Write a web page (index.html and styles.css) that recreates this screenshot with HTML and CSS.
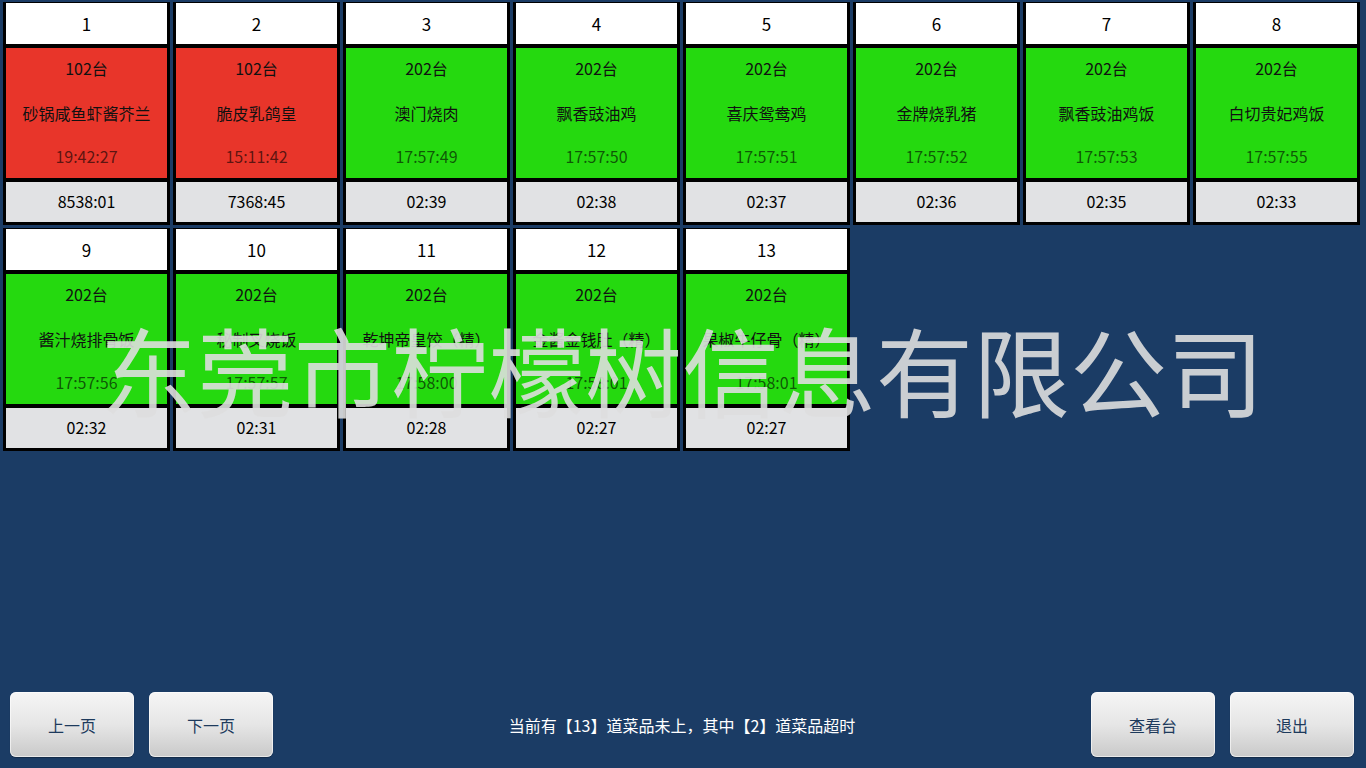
FILE: index.html
```html
<!DOCTYPE html>
<html lang="zh-CN">
<head>
<meta charset="utf-8">
<title>厨房显示</title>
<link rel="stylesheet" href="styles.css">
</head>
<body>
<div class="screen">
  <div class="grid">
    <div class="card"><div class="head">1</div><div class="body red"><div>102台</div><div>砂锅咸鱼虾酱芥兰</div><div class="time">19:42:27</div></div><div class="foot">8538:01</div></div>
    <div class="card"><div class="head">2</div><div class="body red"><div>102台</div><div>脆皮乳鸽皇</div><div class="time">15:11:42</div></div><div class="foot">7368:45</div></div>
    <div class="card"><div class="head">3</div><div class="body green"><div>202台</div><div>澳门烧肉</div><div class="time">17:57:49</div></div><div class="foot">02:39</div></div>
    <div class="card"><div class="head">4</div><div class="body green"><div>202台</div><div>飘香豉油鸡</div><div class="time">17:57:50</div></div><div class="foot">02:38</div></div>
    <div class="card"><div class="head">5</div><div class="body green"><div>202台</div><div>喜庆鸳鸯鸡</div><div class="time">17:57:51</div></div><div class="foot">02:37</div></div>
    <div class="card"><div class="head">6</div><div class="body green"><div>202台</div><div>金牌烧乳猪</div><div class="time">17:57:52</div></div><div class="foot">02:36</div></div>
    <div class="card"><div class="head">7</div><div class="body green"><div>202台</div><div>飘香豉油鸡饭</div><div class="time">17:57:53</div></div><div class="foot">02:35</div></div>
    <div class="card"><div class="head">8</div><div class="body green"><div>202台</div><div>白切贵妃鸡饭</div><div class="time">17:57:55</div></div><div class="foot">02:33</div></div>
    <div class="card"><div class="head">9</div><div class="body green"><div>202台</div><div>酱汁烧排骨饭</div><div class="time">17:57:56</div></div><div class="foot">02:32</div></div>
    <div class="card"><div class="head">10</div><div class="body green"><div>202台</div><div>秘制叉烧饭</div><div class="time">17:57:57</div></div><div class="foot">02:31</div></div>
    <div class="card"><div class="head">11</div><div class="body green"><div>202台</div><div>乾坤帝皇饺（精）</div><div class="time">17:58:00</div></div><div class="foot">02:28</div></div>
    <div class="card"><div class="head">12</div><div class="body green"><div>202台</div><div>金酱金钱肚（精）</div><div class="time">17:58:01</div></div><div class="foot">02:27</div></div>
    <div class="card"><div class="head">13</div><div class="body green"><div>202台</div><div>果椒牛仔骨（精）</div><div class="time">17:58:01</div></div><div class="foot">02:27</div></div>
  </div>
  <div class="bar">
    <div class="btns">
      <button class="btn">上一页</button>
      <button class="btn">下一页</button>
    </div>
    <div class="status">当前有【13】道菜品未上，其中【2】道菜品超时</div>
    <div class="btns">
      <button class="btn">查看台</button>
      <button class="btn">退出</button>
    </div>
  </div>
  <div class="watermark">东莞市柠檬树信息有限公司</div>
</div>
</body>
</html>
```
FILE: styles.css
```css
html, body {
  margin: 0;
  padding: 0;
}
body {
  background: #1b3c65;
  font-family: "Noto Sans CJK SC", "Liberation Sans", sans-serif;
}
.screen {
  position: relative;
  width: 1366px;
  height: 768px;
  display: flex;
  flex-direction: column;
  justify-content: space-between;
  overflow: hidden;
}
.grid {
  display: grid;
  grid-template-columns: repeat(8, 167px);
  column-gap: 3px;
  row-gap: 3px;
  padding: 2px 0 0 3px;
}
.card {
  background: #000;
  padding: 1px 3px 3px 3px;
  display: flex;
  flex-direction: column;
  gap: 4px;
  height: 223px;
  box-sizing: border-box;
}
.head {
  height: 41px;
  background: #ffffff;
  color: #000;
  font-size: 17px;
  line-height: 41px;
  text-align: center;
}
.body {
  height: 130px;
  display: grid;
  grid-template-rows: repeat(3, 43px);
  align-items: center;
  text-align: center;
  font-size: 16px;
  color: #111;
}
.body > div:first-child { margin-top: -3px; }
.body.red { background: #e8352a; }
.body.green { background: #25d90f; }
.body .time { color: rgba(0, 0, 0, 0.62); }
.foot {
  height: 40px;
  background: #e1e2e4;
  color: #000;
  font-size: 16px;
  line-height: 38px;
  text-align: center;
}
.bar {
  display: flex;
  align-items: center;
  justify-content: space-between;
  padding: 0 12px 11px 10px;
}
.btns {
  display: flex;
  gap: 15px;
}
.btn {
  width: 124px;
  height: 65px;
  border: none;
  border-radius: 6px;
  background: linear-gradient(#f5f5f5, #e6e6e6 50%, #c9c9c9);
  box-shadow: inset 0 0 0 1px rgba(255,255,255,0.6), 0 1px 1px rgba(0,0,0,0.3);
  color: #1d3a5c;
  font-family: "Noto Sans CJK SC", "Liberation Sans", sans-serif;
  font-size: 16px;
  padding: 0;
}
.status {
  color: #ffffff;
  font-size: 16px;
}
.watermark {
  position: absolute;
  left: 100px;
  top: 308px;
  font-size: 97px;
  font-weight: 400;
  line-height: 120px;
  white-space: nowrap;
  color: rgba(222, 222, 222, 0.9);
  pointer-events: none;
}
```
